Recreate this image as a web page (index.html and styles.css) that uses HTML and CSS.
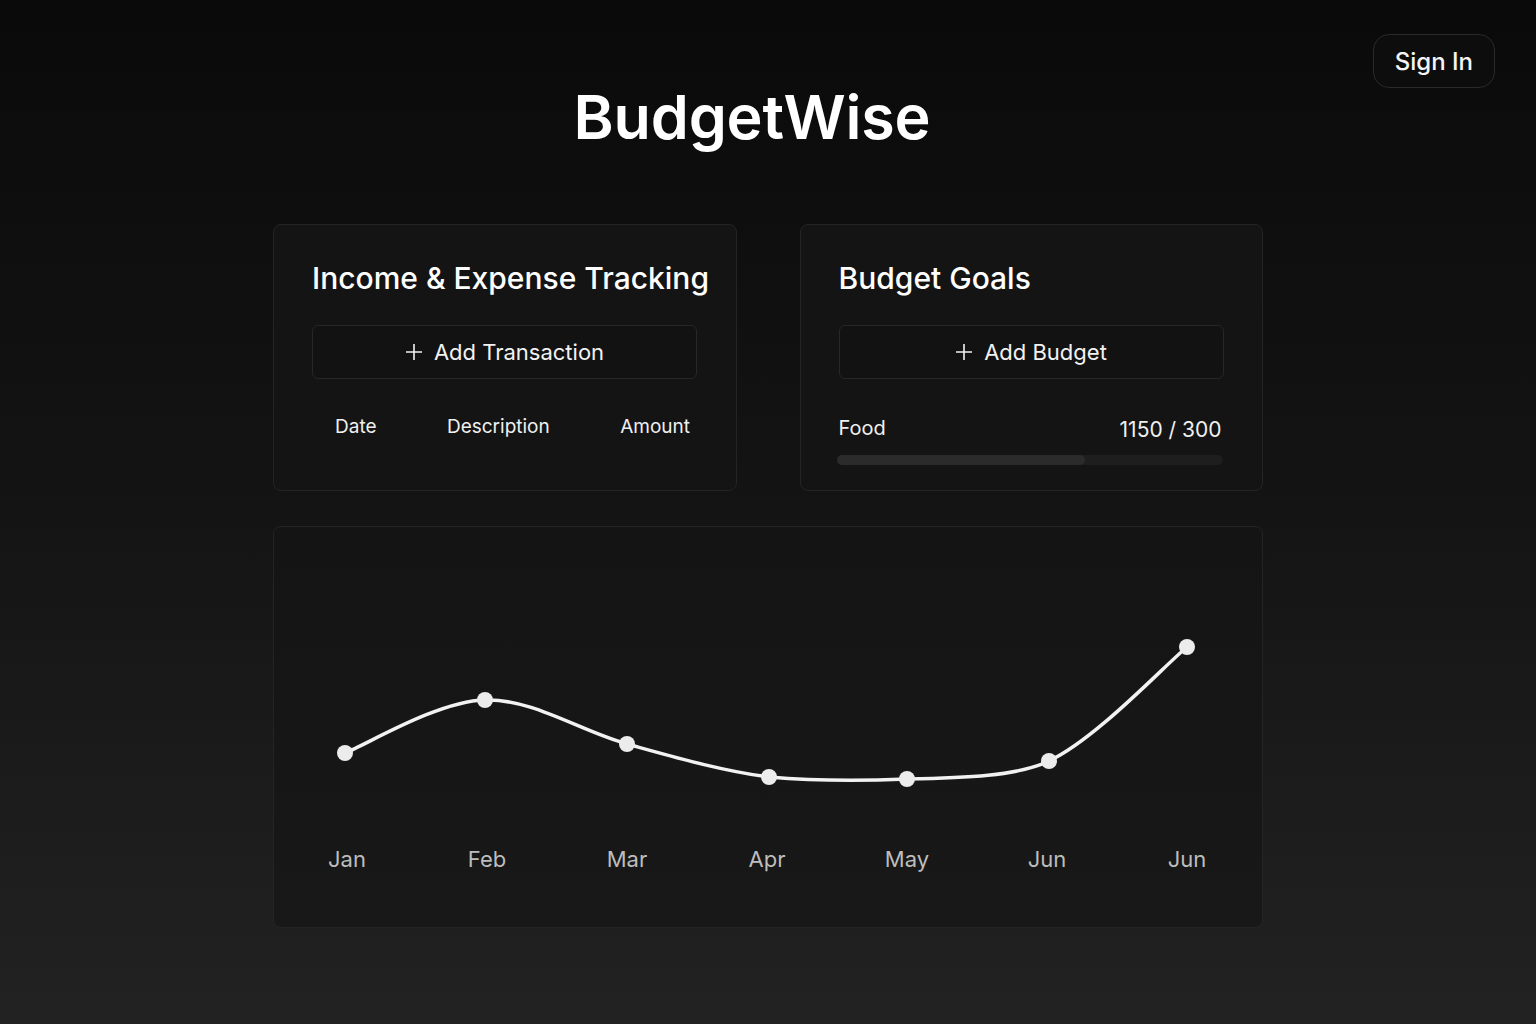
FILE: index.html
```html
<!DOCTYPE html>
<html lang="en">
<head>
    <meta charset="utf-8">
    <meta name="viewport" content="width=device-width, initial-scale=1">
    <title>BudgetWise</title>
    <link rel="stylesheet" href="styles.css">
</head>
<body>
    <header class="top">
        <div></div>
        <h1 class="brand">BudgetWise</h1>
        <button class="signin">Sign In</button>
    </header>

    <main class="board">
        <div class="cards">
            <section class="card">
                <h2 class="card-title">Income &amp; Expense Tracking</h2>
                <button class="add-btn">
                    <svg width="18" height="18" viewBox="0 0 18 18"><path d="M9 1v16M1 9h16" stroke="#f2f2f2" stroke-width="1.6"/></svg>
                    Add Transaction
                </button>
                <div class="table-head">
                    <span>Date</span>
                    <span>Description</span>
                    <span>Amount</span>
                </div>
            </section>

            <section class="card">
                <h2 class="card-title">Budget Goals</h2>
                <button class="add-btn">
                    <svg width="18" height="18" viewBox="0 0 18 18"><path d="M9 1v16M1 9h16" stroke="#f2f2f2" stroke-width="1.6"/></svg>
                    Add Budget
                </button>
                <div class="goal">
                    <span>Food</span>
                    <span class="goal-num">1150 / 300</span>
                </div>
                <div class="bar"><div class="bar-fill" style="width: 64.5%"></div></div>
            </section>
        </div>

        <section class="card chart">
            <svg class="chart-svg" width="990" height="290" viewBox="0 2 990 290">
                <path d="M71 228 C94 219 164 176 211 175 C258 173.5 306 206 353 219 C400 232 448 246 495 252 C541 256 586 256 633 254 C690 253 745 251 775 236 C822 214 890 141 913 122"
                      fill="none" stroke="#f2f2f2" stroke-width="3.5" stroke-linecap="round"/>
                <g fill="#ececec">
                    <circle cx="71" cy="228" r="8"/>
                    <circle cx="211" cy="175" r="8"/>
                    <circle cx="353" cy="219" r="8"/>
                    <circle cx="495" cy="252" r="8"/>
                    <circle cx="633" cy="254" r="8"/>
                    <circle cx="775" cy="236" r="8"/>
                    <circle cx="913" cy="122" r="8"/>
                </g>
            </svg>
            <div class="months">
                <span>Jan</span>
                <span>Feb</span>
                <span>Mar</span>
                <span>Apr</span>
                <span>May</span>
                <span>Jun</span>
                <span>Jun</span>
            </div>
        </section>
    </main>
</body>
</html>
```

FILE: styles.css
```css
body {
    margin: 0;
    min-height: 1024px;
    background: linear-gradient(180deg, #0a0a0a 0%, #141414 50%, #222222 100%);
    font-family: Inter, "Noto Sans", sans-serif;
    color: #f5f5f5;
}

.top {
    display: grid;
    grid-template-columns: 1fr auto 1fr;
    padding: 34px 41px 0;
}

.brand {
    margin: 40px 32px 0 0;
    font-size: 61px;
    font-weight: 600;
    line-height: 86px;
    letter-spacing: -0.2px;
    color: #ffffff;
}

.signin {
    justify-self: end;
    align-self: start;
    height: 54px;
    padding: 0 21px;
    background: #0d0d0d;
    border: 1px solid #2a2a2a;
    border-radius: 16px;
    color: #f5f5f5;
    font-family: Inter, sans-serif;
    font-size: 24px;
    font-weight: 500;
}

.board {
    width: 990px;
    margin: 0 auto;
    padding-top: 64px;
}

.cards {
    display: flex;
    gap: 63px;
    margin-bottom: 35px;
}

.card {
    background: #141414;
    border: 1px solid #242424;
    border-radius: 8px;
    box-sizing: border-box;
}

.cards .card {
    width: 464px;
    height: 267px;
    padding: 34px 20px 0 38px;
}

.card-title {
    margin: 0;
    font-size: 30px;
    font-weight: 500;
    line-height: 38px;
    white-space: nowrap;
    color: #ffffff;
}

.add-btn {
    display: flex;
    align-items: center;
    justify-content: center;
    gap: 11px;
    width: 385px;
    height: 54px;
    margin-top: 28px;
    background: #121212;
    border: 1px solid #272727;
    border-radius: 6px;
    color: #f2f2f2;
    font-family: Inter, sans-serif;
    font-size: 22px;
    font-weight: 400;
}

.table-head {
    display: flex;
    justify-content: space-between;
    width: 385px;
    box-sizing: border-box;
    padding: 0 7px 0 23px;
    margin-top: 36px;
    font-size: 19px;
    line-height: 24px;
    color: #f0f0f0;
}

.goal {
    display: flex;
    justify-content: space-between;
    align-items: baseline;
    width: 385px;
    margin-top: 37px;
    font-size: 20px;
    line-height: 24px;
    color: #f0f0f0;
}

.goal-num {
    font-size: 21px;
    padding-right: 2px;
    position: relative;
    top: 2px;
}

.bar {
    width: 386px;
    height: 10px;
    margin: 15px 0 0 -2px;
    background: #1e1e1e;
    border-radius: 5px;
}

.bar-fill {
    height: 100%;
    background: #2b2b2b;
    border-radius: 5px;
}

.chart {
    height: 402px;
    background: linear-gradient(180deg, #141414 0%, #181818 100%);
}

.chart-svg {
    display: block;
}

.months {
    display: grid;
    grid-template-columns: repeat(7, 140px);
    padding-left: 3px;
    margin-top: 28px;
    font-size: 22px;
    line-height: 28px;
    color: #bdbdbd;
    text-align: center;
}
```
